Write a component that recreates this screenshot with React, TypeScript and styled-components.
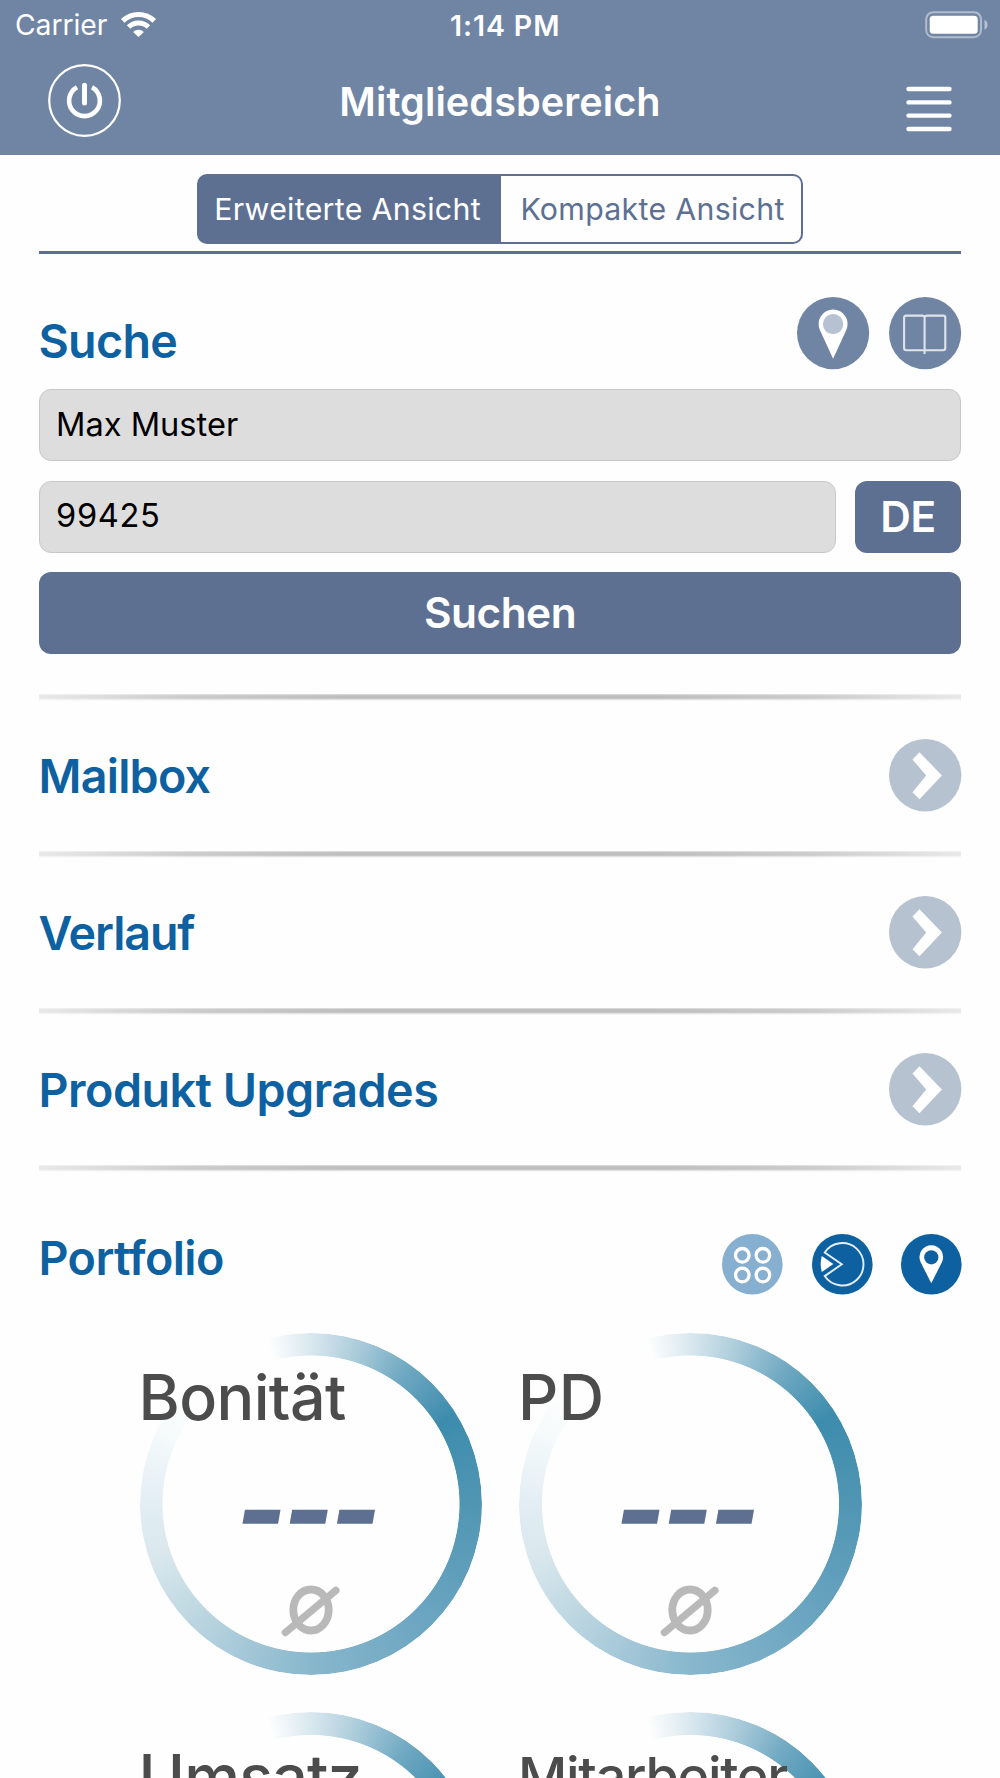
import React from "react";
import styled, { createGlobalStyle } from "styled-components";

const GlobalStyle = createGlobalStyle`
  *, *::before, *::after { box-sizing: border-box; }
  html, body { margin: 0; padding: 0; background: #fefefe; }
  body { font-family: Inter, "Liberation Sans", sans-serif; }
  button, input { font: inherit; border: 0; margin: 0; padding: 0; background: none; }
  svg { display: block; overflow: visible; }
`;

const steel = "#5d7092";
const slate = "#7085a4";
const blue = "#0d61a1";

const Screen = styled.div`
  width: 1000px;
  height: 1778px;
  overflow: hidden;
  display: flex;
  flex-direction: column;
`;

const Header = styled.header`
  flex: none;
  height: 154.5px;
  background: ${slate};
  color: #fff;
`;

const StatusBar = styled.div`
  height: 51px;
  display: grid;
  grid-template-columns: 451px 1fr auto;
  align-items: center;
  padding: 0 12px 2px 0;
  white-space: nowrap;
`;

const Carrier = styled.div`
  display: flex;
  align-items: center;
  gap: 13px;
  padding-left: 15px;
  font-size: 28.3px;
  line-height: 49px;
`;

const CarrierName = styled.span`
  width: 93px;
  padding-top: 1px;
  letter-spacing: -0.05px;
`;

const Clock = styled.div`
  font-size: 28.5px;
  font-weight: 600;
  line-height: 49px;
  margin-left: -1px;
  letter-spacing: 0.9px;
`;

const NavBar = styled.div`
  display: grid;
  grid-template-columns: 72px 1fr 46px;
  align-items: start;
  padding: 13px 48px 0 48px;
`;

const IconButton = styled.button`
  display: block;
  line-height: 0;
`;

const MenuButton = styled(IconButton)`
  margin-top: 22.4px;
`;

const Title = styled.h1`
  margin: 0;
  padding: 1px 26px 0 0;
  text-align: center;
  font-size: 39.6px;
  font-weight: 600;
  line-height: 75px;
  letter-spacing: 0.1px;
  white-space: nowrap;
`;

const Main = styled.main`
  padding: 0 39px;
  display: flex;
  flex-direction: column;
`;

const ViewSwitch = styled.div`
  height: 99.5px;
  padding-top: 19.5px;
  border-bottom: 3px solid ${steel};
  display: flex;
  justify-content: center;
  align-items: flex-start;
`;

const Segment = styled.button<{ $active?: boolean }>`
  width: ${(p) => (p.$active ? 304 : 302)}px;
  height: 70px;
  border: 2px solid ${steel};
  border-radius: ${(p) => (p.$active ? "10px 0 0 10px" : "0 10px 10px 0")};
  border-left-width: ${(p) => (p.$active ? 2 : 0)}px;
  padding: ${(p) => (p.$active ? "0 3px 0 0" : "0 0 0 3px")};
  background: ${(p) => (p.$active ? steel : "#fefefe")};
  color: ${(p) => (p.$active ? "#fff" : steel)};
  font-size: 30.3px;
  letter-spacing: 0.3px;
  line-height: 66px;
  white-space: nowrap;
`;

const SearchSection = styled.section`
  padding: 43px 0 39.2px;
  display: flex;
  flex-direction: column;
`;

const SectionHead = styled.div`
  display: flex;
  justify-content: space-between;
  align-items: center;
`;

const Heading = styled.h2<{ $track: number; $shift?: number }>`
  margin: 0 0 0 -0.5px;
  color: ${blue};
  font-size: 46.6px;
  font-weight: 600;
  line-height: 58px;
  letter-spacing: ${(p) => p.$track}px;
  padding-top: ${(p) => p.$shift ?? 0}px;
  white-space: nowrap;
`;

const IconGroup = styled.div<{ $gap: number }>`
  display: flex;
  gap: ${(p) => p.$gap}px;
`;

const Form = styled.div`
  display: grid;
  grid-template-columns: 797px 106px;
  column-gap: 19px;
  row-gap: 19.4px;
  padding-top: 19px;
`;

const Field = styled.input<{ $wide?: boolean; $track: number }>`
  grid-column: ${(p) => (p.$wide ? "1 / -1" : "auto")};
  height: 72.3px;
  min-width: 0;
  border: 1px solid #c8c8c8;
  border-radius: 12px;
  background: #ddd;
  color: #000;
  font-size: 32.6px;
  letter-spacing: ${(p) => p.$track}px;
  padding: 0 16px 3px;
`;

const SolidButton = styled.button<{ $wide?: boolean }>`
  grid-column: ${(p) => (p.$wide ? "1 / -1" : "auto")};
  height: ${(p) => (p.$wide ? 82 : 72.3)}px;
  border-radius: 12px;
  background: ${steel};
  color: #fff;
  font-size: 42.4px;
  font-weight: 600;
  padding-bottom: ${(p) => (p.$wide ? 2 : 1)}px;
  letter-spacing: ${(p) => (p.$wide ? -0.5 : -0.4)}px;
`;

const Rule = styled.hr`
  width: 100%;
  height: 7px;
  margin: 0;
  border: 0;
  background:
    linear-gradient(90deg, #fefefeaa, #fefefe38 16%, #fefefe00 34%, #fefefe00 66%, #fefefe38 84%, #fefefeaa),
    linear-gradient(180deg, #e2e2e2, #bdbdbd 25%, #bdbdbd 60%, #e4e4e4 80%, #fefefe);
`;

const Row = styled.div`
  height: 150px;
  display: flex;
  align-items: center;
  justify-content: space-between;
`;

const PortfolioHead = styled(SectionHead)`
  height: 61px;
  margin: 62.4px -1px 0 0;
  align-items: flex-start;

  ${Heading} {
    margin-top: -4.5px;
  }
`;

const Gauges = styled.div`
  display: grid;
  grid-template-columns: 342.5px 342.5px;
  gap: 37px;
  padding: 38px 0 0 100.5px;
`;

const Gauge = styled.div`
  height: 342.5px;
  display: grid;
  grid-template: 342.5px / 342.5px;
  isolation: isolate;
  & > * { grid-area: 1 / 1; }
`;

const Ring = styled.div`
  z-index: -1;
  border-radius: 50%;
  background: conic-gradient(
    #d9e8ef 0deg, #aacbda 17deg, #70a9c2 35deg, #3d8cad 58deg, #5096b3 90deg,
    #6ba5c1 135deg, #88b7cc 180deg, #a5c8d8 205deg, #bfd8e2 228deg,
    #dae8ee 252deg, #e2edf4 270deg, #f5fafb 295deg, #fefefe 312deg,
    #fefefe 345deg, #d9e8ef 360deg
  );
  mask: radial-gradient(circle closest-side, transparent 148.1px, #000 148.9px, #000 100%);
`;

const GaugeLabel = styled.div<{ $size: number; $track: number }>`
  margin-left: -1px;
  padding-top: 26.5px;
  color: #4c4c4c;
  font-size: ${(p) => p.$size}px;
  font-weight: 500;
  line-height: 76px;
  letter-spacing: ${(p) => p.$track}px;
  white-space: nowrap;
`;

const GaugeValue = styled.div`
  align-self: start;
  justify-self: center;
  padding: 127px 0 0 17px;
  color: ${steel};
  font-size: 106px;
  font-weight: 800;
  line-height: 100px;
  letter-spacing: -2.8px;
  transform: skewX(-10deg);
`;

const Average = styled.svg`
  margin: 250.5px 0 0 140px;
`;

const Disc = ({ r, fill, children }: { r: number; fill: string; children: React.ReactNode }) => (
  <svg width={r * 2} height={r * 2} viewBox={`${-r} ${-r} ${r * 2} ${r * 2}`} fill="none">
    <circle r={r} fill={fill} />
    {children}
  </svg>
);

const Wifi = () => (
  <svg width="35" height="26" viewBox="0 0 35 26" fill="none" stroke="#fff" strokeWidth="5">
    <path d="M1.7 8.9a22.5 22.5 0 0 1 31.6 0" />
    <path d="M7.6 15a14.2 14.2 0 0 1 19.8 0" />
    <path d="M17.5 25l-5.4-5.1a7.6 7.6 0 0 1 10.8 0z" fill="#fff" stroke="none" />
  </svg>
);

const Battery = () => (
  <svg width="63" height="28" viewBox="0 0 63 28">
    <rect x="1.2" y="1.2" width="54.8" height="25" rx="7" fill="none" stroke="#fff" strokeOpacity=".45" strokeWidth="2" />
    <rect x="4.7" y="4.7" width="48" height="18" rx="3.5" fill="#fff" />
    <path d="M59.5 8.7q3 1.5 3 5t-3 5z" fill="#fff" fillOpacity=".5" />
  </svg>
);

const Power = () => (
  <svg width="73" height="73" viewBox="-36.5 -36.5 73 73" fill="none" stroke="#fff">
    <circle r="35.3" strokeWidth="2.2" />
    <path d="M-7.5 -13.2A15.4 15.4 0 1 0 7.5 -13.2" strokeWidth="4.6" />
    <path d="M0 -15.2V2.4" strokeWidth="5" strokeLinecap="round" />
  </svg>
);

const Menu = () => (
  <svg width="46" height="46" viewBox="0 0 46 46" stroke="#fff" strokeWidth="4.4" strokeLinecap="round">
    <path d="M2.5 3h41M2.5 16.4h41M2.5 29.6h41M2.5 43h41" />
  </svg>
);

const Chevron = () => (
  <Disc r={36.2} fill="#b7c2d1">
    <path d="M-5.7 -23L16.7 .3L-5.7 24L-12.7 17L1 .3L-12.7 -15.7z" fill="#fff" />
  </Disc>
);

const AverageIcon = () => (
  <Average width="62" height="54" viewBox="-31 -27 62 54" fill="none" stroke="#b9b9b9" strokeLinecap="round">
    <ellipse rx="17.7" ry="20.5" strokeWidth="7.8" />
    <path d="M-25.6 22.5L24.9 -19.7" strokeWidth="7.4" />
  </Average>
);

const rows = [
  { name: "Mailbox", track: -0.75 },
  { name: "Verlauf", track: -1.1 },
  { name: "Produkt Upgrades", track: -0.5 },
];

const gauges = [
  { name: "Bonität", size: 62.8, track: -0.6 },
  { name: "PD", size: 62.8, track: 0.5 },
  { name: "Umsatz", size: 62.8, track: -0.8 },
  { name: "Mitarbeiter", size: 54, track: -1.3 },
];

export default function App() {
  return (
    <Screen>
      <GlobalStyle />
      <Header>
        <StatusBar>
          <Carrier>
            <CarrierName>Carrier</CarrierName>
            <Wifi />
          </Carrier>
          <Clock>1:14 PM</Clock>
          <Battery />
        </StatusBar>
        <NavBar>
          <IconButton aria-label="Abmelden"><Power /></IconButton>
          <Title>Mitgliedsbereich</Title>
          <MenuButton aria-label="Menü"><Menu /></MenuButton>
        </NavBar>
      </Header>
      <Main>
        <ViewSwitch>
          <Segment $active>Erweiterte Ansicht</Segment>
          <Segment>Kompakte Ansicht</Segment>
        </ViewSwitch>
        <SearchSection>
          <SectionHead>
            <Heading $track={-0.7} $shift={15}>Suche</Heading>
            <IconGroup $gap={19.5}>
              <Disc r={36.1} fill={slate}>
                <path d="M-13.1 -2.9A14.5 14.5 0 1 1 13.1 -2.9L0 25.6z" fill="#fff" />
                <circle cy="-9" r="10.2" fill="#b6c1d1" />
              </Disc>
              <Disc r={36.1} fill={slate}>
                <path
                  d="M-.5 -15.8q-.3 -1.7 -2.2 -1.7H-18.8q-2.2 0 -2.2 2.2V15q0 2.2 2.2 2.2H18q2.2 0 2.2 -2.2V-15.3q0 -2.2 -2.2 -2.2H1.7q-1.9 0 -2.2 1.7V21"
                  stroke="#dfe4eb"
                  strokeWidth="2.1"
                />
              </Disc>
            </IconGroup>
          </SectionHead>
          <Form>
            <Field $wide $track={0} defaultValue="Max Muster" />
            <Field $track={0.7} defaultValue="99425" />
            <SolidButton>DE</SolidButton>
            <SolidButton $wide>Suchen</SolidButton>
          </Form>
        </SearchSection>
        <Rule />
        {rows.map((row) => (
          <React.Fragment key={row.name}>
            <Row>
              <Heading $track={row.track}>{row.name}</Heading>
              <Chevron />
            </Row>
            <Rule />
          </React.Fragment>
        ))}
        <PortfolioHead>
          <Heading $track={-0.6}>Portfolio</Heading>
          <IconGroup $gap={29}>
            <Disc r={30.3} fill="#87b0d0">
              <g stroke="#fff" strokeWidth="3.3">
                <circle cx="-10" cy="-9" r="6.8" />
                <circle cx="10.6" cy="-9" r="6.8" />
                <circle cx="-10" cy="10.7" r="6.8" />
                <circle cx="10.6" cy="10.7" r="6.8" />
              </g>
            </Disc>
            <Disc r={30.3} fill={blue}>
              <path d="M-17.6 -11.8A21.2 21.2 0 1 1 -17.6 11.8L-.5 0z" stroke="#e7eff6" strokeWidth="1.9" />
              <path d="M-20.5 -8.3L-9 -.2L-20.5 7.7Q-22.8 0 -20.5 -8.3z" fill="#fff" />
            </Disc>
            <Disc r={30.3} fill={blue}>
              <path d="M-10.6 -2A11.8 11.8 0 1 1 10.6 -2L0 19z" fill="#fff" />
              <circle cy="-7" r="7.1" fill={blue} />
            </Disc>
          </IconGroup>
        </PortfolioHead>
        <Gauges>
          {gauges.map((g) => (
            <Gauge key={g.name}>
              <Ring />
              <GaugeLabel $size={g.size} $track={g.track}>{g.name}</GaugeLabel>
              <GaugeValue>---</GaugeValue>
              <AverageIcon />
            </Gauge>
          ))}
        </Gauges>
      </Main>
    </Screen>
  );
}
